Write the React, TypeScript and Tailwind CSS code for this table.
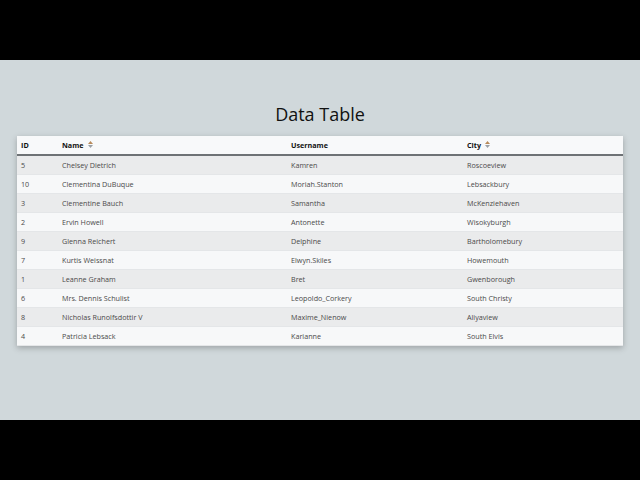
import React from "react";

const rows = [
  ["5", "Chelsey Dietrich", "Kamren", "Roscoeview"],
  ["10", "Clementina DuBuque", "Moriah.Stanton", "Lebsackbury"],
  ["3", "Clementine Bauch", "Samantha", "McKenziehaven"],
  ["2", "Ervin Howell", "Antonette", "Wisokyburgh"],
  ["9", "Glenna Reichert", "Delphine", "Bartholomebury"],
  ["7", "Kurtis Weissnat", "Elwyn.Skiles", "Howemouth"],
  ["1", "Leanne Graham", "Bret", "Gwenborough"],
  ["6", "Mrs. Dennis Schulist", "Leopoldo_Corkery", "South Christy"],
  ["8", "Nicholas Runolfsdottir V", "Maxime_Nienow", "Aliyaview"],
  ["4", "Patricia Lebsack", "Karianne", "South Elvis"],
];

function SortIcon() {
  return (
    <svg width="5" height="7" viewBox="0 0 5 7" className="ml-[4px] inline-block">
      <polygon points="0,3 2.5,0 5,3" fill="#b88a5a" />
      <polygon points="0,4 2.5,7 5,4" fill="#9aa0a6" />
    </svg>
  );
}

const grid = "grid grid-cols-[41px_229px_176px_1fr]";

export default function App() {
  return (
    <div className="w-[640px] h-[480px] bg-black flex flex-col" style={{ fontFamily: '"Open Sans", "Noto Sans", sans-serif' }}>
      <div className="h-[60px]" />
      <div className="h-[360px] bg-[#d0d8db] flex flex-col items-center">
        <h1 className="mt-[41px] h-[35px] text-[18px] leading-[26px] text-[#111] font-normal">Data Table</h1>
        <div className="w-[606px] bg-[#f7f8f9] shadow-[0_2px_6px_rgba(0,0,0,0.25)]">
          <div className={`${grid} h-[20px] items-center bg-[#f8f9fa] border-b-2 border-[#6e7275] text-[7.2px] font-bold text-[#111]`}>
            <div className="pl-[4px]">ID</div>
            <div className="pl-[4px] flex items-center">Name<SortIcon /></div>
            <div className="pl-[4px]">Username</div>
            <div className="pl-[4px] flex items-center">City<SortIcon /></div>
          </div>
          {rows.map((r, i) => (
            <div
              key={i}
              className={`${grid} h-[19px] items-center text-[7.2px] text-[#4a4a4a] border-b border-[#e4e6e8] ${i % 2 === 0 ? "bg-[#eaebec]" : "bg-[#f7f8f9]"}`}
            >
              {r.map((c, j) => (
                <div key={j} className="pl-[4px] whitespace-nowrap">{c}</div>
              ))}
            </div>
          ))}
        </div>
      </div>
      <div className="h-[60px]" />
    </div>
  );
}
